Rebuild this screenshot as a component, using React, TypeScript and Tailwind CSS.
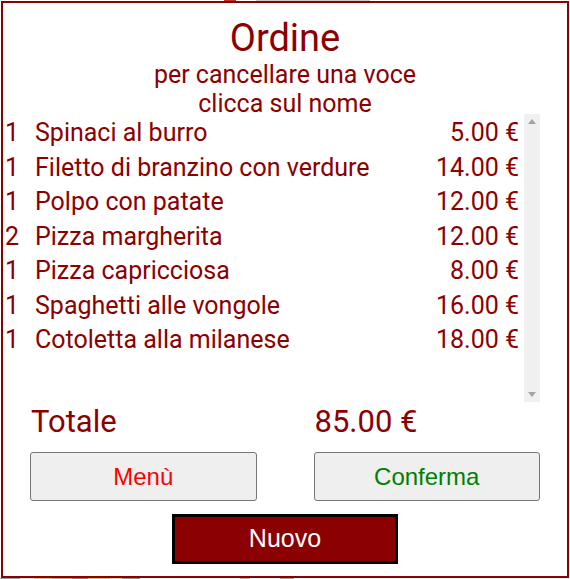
const items = [
  { qty: 1, name: "Spinaci al burro", price: 5 },
  { qty: 1, name: "Filetto di branzino con verdure", price: 14 },
  { qty: 1, name: "Polpo con patate", price: 12 },
  { qty: 2, name: "Pizza margherita", price: 12 },
  { qty: 1, name: "Pizza capricciosa", price: 8 },
  { qty: 1, name: "Spaghetti alle vongole", price: 16 },
  { qty: 1, name: "Cotoletta alla milanese", price: 18 },
];

function ScrollTrack() {
  return (
    <div className="w-[16px] bg-[#f0f0f0] flex flex-col items-center justify-between py-[5px]">
      <svg width="8" height="5" viewBox="0 0 8 5">
        <path d="M0 5 L4 0 L8 5 Z" fill="#a3a3a3" />
      </svg>
      <svg width="8" height="5" viewBox="0 0 8 5">
        <path d="M0 0 L4 5 L8 0 Z" fill="#a3a3a3" />
      </svg>
    </div>
  );
}

export default function App() {
  const total = items.reduce((sum, it) => sum + it.price, 0);

  return (
    <div className="w-[570px] h-[579px] bg-white overflow-hidden">
      {/* page behind the dialog, only its edges show */}
      <div className="flex h-px">
        <div className="w-[224px]" />
        <div className="w-[12px] bg-[#b33]" />
        <div className="w-[20px]" />
        <div className="w-[114px] bg-[#ccc]" />
      </div>

      <div
        className="ml-px w-[568px] h-[577px] border-2 border-[#8b0000] flex flex-col text-[#8b0000]"
        style={{ fontFamily: "Roboto, 'Liberation Sans', sans-serif" }}
      >
        <h1 className="mt-[14px] text-center text-[38px] leading-[42px]">Ordine</h1>
        <p className="mt-px text-center text-[25px] leading-[29px]">
          per cancellare una voce
          <br />
          clicca sul nome
        </p>

        <div className="-mt-[4px] ml-px mr-[27px] h-[288px] flex">
          <div className="flex-1 pt-[2px]">
            {items.map((it) => (
              <div key={it.name} className="flex text-[25px] leading-[34.5px] cursor-pointer">
                <span className="w-[31px] pl-px">{it.qty}</span>
                <span className="flex-1">{it.name}</span>
                <span className="pr-[5px]">{it.price.toFixed(2)} €</span>
              </div>
            ))}
          </div>
          <ScrollTrack />
        </div>

        <div className="mt-[2px] grid grid-cols-2 gap-[57px] px-[27px] text-[31px] leading-[35px]">
          <span className="pl-[1px]">Totale</span>
          <span className="pl-[1px]">{total.toFixed(2)} €</span>
        </div>

        <div
          className="mt-[13px] grid grid-cols-2 gap-[57px] px-[27px] text-[24px]"
          style={{ fontFamily: "'Liberation Sans', Arial, sans-serif" }}
        >
          <button className="h-[49px] rounded-[3px] border border-[#767676] bg-[#efefef] text-[#ff0000]">
            Menù
          </button>
          <button className="h-[49px] rounded-[3px] border border-[#767676] bg-[#efefef] text-[#008000]">
            Conferma
          </button>
        </div>

        <button
          className="mt-[13px] mx-auto w-[226px] h-[50px] border-[3px] border-black bg-[#8b0000] text-white text-[25px]"
          style={{ fontFamily: "'Liberation Sans', Arial, sans-serif" }}
        >
          Nuovo
        </button>
      </div>

      <div className="flex h-px">
        <div className="w-[20px] bg-[#9aa3ad]" />
        <div className="w-[14px] bg-[#e8e0d0]" />
        <div className="w-[18px] bg-[#d9c48a]" />
        <div className="w-[20px] bg-[#c9a27a]" />
        <div className="w-[16px] bg-[#b87060]" />
        <div className="w-[22px] bg-[#d8c070]" />
        <div className="w-[12px] bg-[#e0d8a0]" />
        <div className="w-[18px] bg-[#a09080]" />
        <div className="w-[100px]" />
        <div className="w-[10px] bg-[#c0b0a0]" />
        <div className="w-[30px]" />
        <div className="w-[14px] bg-[#b0a090]" />
      </div>
    </div>
  );
}
